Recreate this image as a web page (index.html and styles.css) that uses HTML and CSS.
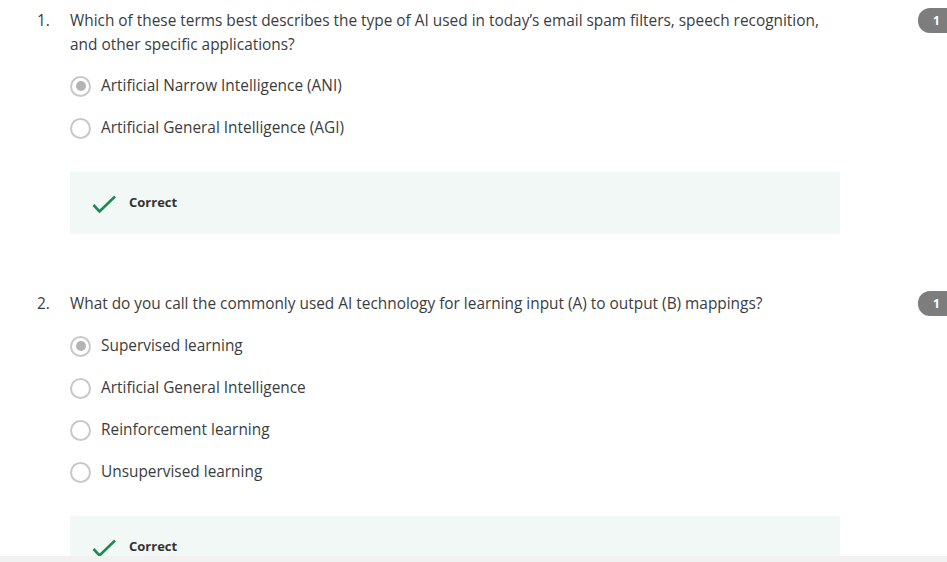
FILE: index.html
```html
<!DOCTYPE html>
<html>
<head>
<meta charset="utf-8">
<link rel="stylesheet" href="styles.css">
</head>
<body>
<div class="viewport">
  <main class="quiz">
    <section class="question">
      <div class="q-head">
        <span class="q-num">1.</span>
        <p class="q-text">Which of these terms best describes the type of AI used in today’s email spam filters, speech recognition, and other specific applications?</p>
        <span class="badge">1</span>
      </div>
      <div class="options">
        <div class="option"><span class="radio checked"></span><span>Artificial Narrow Intelligence (ANI)</span></div>
        <div class="option"><span class="radio"></span><span>Artificial General Intelligence (AGI)</span></div>
      </div>
      <div class="feedback">
        <svg class="check" width="24" height="18" viewBox="0 0 24 18"><path d="M1.5 10 L7.5 16.5 L23 1.5" fill="none" stroke="#1f8a57" stroke-width="2.6"/></svg>
        <span class="fb-text">Correct</span>
      </div>
    </section>
    <section class="question q2">
      <div class="q-head">
        <span class="q-num">2.</span>
        <p class="q-text">What do you call the commonly used AI technology for learning input (A) to output (B) mappings?</p>
        <span class="badge">1</span>
      </div>
      <div class="options">
        <div class="option"><span class="radio checked"></span><span>Supervised learning</span></div>
        <div class="option"><span class="radio"></span><span>Artificial General Intelligence</span></div>
        <div class="option"><span class="radio"></span><span>Reinforcement learning</span></div>
        <div class="option"><span class="radio"></span><span>Unsupervised learning</span></div>
      </div>
      <div class="feedback">
        <svg class="check" width="24" height="18" viewBox="0 0 24 18"><path d="M1.5 10 L7.5 16.5 L23 1.5" fill="none" stroke="#1f8a57" stroke-width="2.6"/></svg>
        <span class="fb-text">Correct</span>
      </div>
    </section>
  </main>
  <div class="hscroll"></div>
</div>
</body>
</html>
```
FILE: styles.css
```css
html, body {
  margin: 0;
  padding: 0;
  background: #ffffff;
}
body {
  font-family: "Open Sans", "Noto Sans", sans-serif;
  color: #3a3d3f;
  font-size: 15.4px;
}
.viewport {
  height: 562px;
  width: 947px;
  display: flex;
  flex-direction: column;
  overflow: hidden;
}
.quiz {
  flex: 1;
  overflow: hidden;
  padding: 9px 0 0 37px;
}
.hscroll {
  height: 6px;
  background: #f1f1f1;
  flex-shrink: 0;
}
.question {
  display: flex;
  flex-direction: column;
}
.q2 {
  margin-top: 58px;
}
.q-head {
  display: flex;
  align-items: flex-start;
}
.q-num {
  width: 33px;
  flex-shrink: 0;
  line-height: 24px;
}
.q-text {
  margin: 0;
  width: 770px;
  flex-shrink: 0;
  line-height: 24px;
}
.badge {
  flex-shrink: 0;
  margin-left: 78px;
  margin-top: -1px;
  width: 44px;
  height: 25px;
  border-radius: 12px;
  background: #7d7d7d;
  color: #ffffff;
  font-weight: 700;
  font-size: 12px;
  line-height: 25px;
  padding-left: 15px;
  box-sizing: border-box;
}
.options {
  margin-top: 8px;
  padding-left: 33px;
  display: flex;
  flex-direction: column;
}
.q2 .options {
  margin-top: 9px;
}
.option {
  height: 42px;
  display: flex;
  align-items: center;
  gap: 10px;
  line-height: 20px;
}
.radio {
  width: 21px;
  height: 21px;
  box-sizing: border-box;
  border: 2px solid #c8c8c8;
  border-radius: 50%;
  flex-shrink: 0;
  display: flex;
  align-items: center;
  justify-content: center;
}
.radio.checked::after {
  content: "";
  width: 10px;
  height: 10px;
  border-radius: 50%;
  background: #b4b4b4;
}
.feedback {
  margin-top: 23px;
  margin-left: 33px;
  width: 770px;
  height: 62px;
  background: #f2f8f5;
  display: flex;
  align-items: center;
  padding-left: 22px;
  box-sizing: border-box;
  gap: 14px;
}
.q2 .feedback {
  margin-top: 23px;
}
.check {
  flex-shrink: 0;
  margin-top: 2px;
}
.fb-text {
  font-weight: 700;
  font-size: 13px;
  color: #333333;
  margin-left: -1px;
  margin-bottom: 2px;
}
```
